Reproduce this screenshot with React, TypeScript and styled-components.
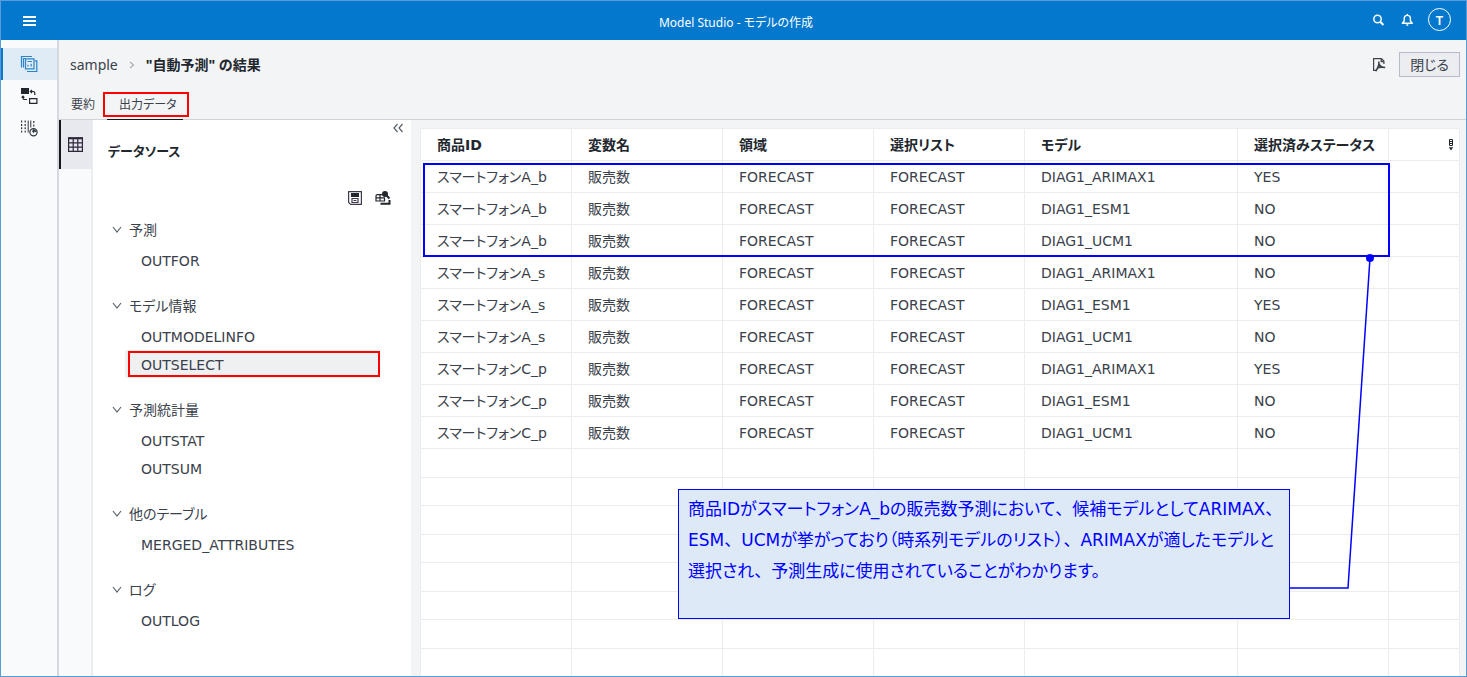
import React from "react";
import styled, { createGlobalStyle } from "styled-components";

const GlobalStyle = createGlobalStyle`
  *, *::before, *::after { box-sizing: border-box; }
  html, body { margin: 0; padding: 0; }
  body {
    background: #f3f4f6;
    color: #3a414a;
    font-family: "DejaVu Sans", "Noto Sans CJK JP", sans-serif;
    font-feature-settings: "palt";
    font-size: 14px;
    line-height: 20px;
  }
  button { font: inherit; font-feature-settings: inherit; color: inherit; margin: 0; padding: 0; border: 0; background: none; cursor: pointer; }
  svg { display: block; }
`;

const latin = `"Noto Sans", "Noto Sans CJK JP", sans-serif`;

const Window = styled.div`
  display: flex;
  flex-direction: column;
  height: 100vh;
  overflow: hidden;
  border: 1px solid #5b9bd5;
`;

const TopBar = styled.header`
  flex: none;
  display: grid;
  grid-template-columns: 1fr auto 1fr;
  align-items: center;
  height: 39px;
  padding: 0 15px 0 20px;
  background: #0378cd;
  color: #fff;
  font-family: ${latin};
`;

const AppTitle = styled.h1`
  margin: 0;
  padding-top: 4px;
  font-size: 12px;
  font-weight: 400;
`;

const TopActions = styled.div`
  display: flex;
  align-items: center;
  justify-content: flex-end;
  gap: 13px;
  padding-bottom: 2px;
`;

const IconButton = styled.button`
  display: flex;
  align-items: center;
  justify-content: center;
  justify-self: start;
  width: 16px;
  height: 16px;
`;

const Avatar = styled.button`
  width: 23px;
  height: 23px;
  border: 1px solid #fff;
  border-radius: 50%;
  font-size: 13px;
  font-weight: 600;
  line-height: 20px;
  text-align: center;
`;

const Body = styled.div`
  flex: 1;
  display: flex;
  min-height: 0;
`;

const AppRail = styled.nav`
  flex: none;
  width: 58px;
  padding-top: 8px;
  background: #f9fafc;
  border-right: 2px solid #d5d8de;
`;

const RailButton = styled.button<{ $active?: boolean }>`
  display: flex;
  align-items: center;
  justify-content: center;
  width: 100%;
  height: 32px;
  padding-right: 2px;
  border-left: 2px solid ${(p) => (p.$active ? "#0378cd" : "transparent")};
  background: ${(p) => (p.$active ? "#dfecf6" : "transparent")};
`;

const Main = styled.main`
  flex: 1;
  display: flex;
  flex-direction: column;
  min-width: 0;
`;

const PageHead = styled.div`
  flex: none;
  display: flex;
  align-items: center;
  justify-content: space-between;
  height: 49px;
  padding: 0 6px 0 11px;
`;

const Crumbs = styled.nav`
  display: flex;
  align-items: center;
  gap: 11px;
  font-family: ${latin};

  a { color: inherit; text-decoration: none; }
  strong { color: #22272e; }
`;

const HeadActions = styled.div`
  display: flex;
  align-items: center;
  gap: 12px;
`;

const CloseButton = styled.button`
  height: 25px;
  padding: 0 10px;
  border: 1px solid #b4bbc9;
  background: #ebedf1;
`;

const TabList = styled.div`
  flex: none;
  display: flex;
  gap: 6px;
  height: 31px;
  border-bottom: 1px solid #d0d3d8;
`;

const Tab = styled.button<{ $active?: boolean }>`
  position: relative;
  height: 31px;
  padding: 2px 6px 0 12px;
  font-size: 12px;
  border-bottom: 1px solid ${(p) => (p.$active ? "#15191f" : "transparent")};
`;

const TabMark = styled.span`
  position: absolute;
  inset: 3px -6px 2px -4px;
  border: 2px solid #f00;
`;

const Content = styled.div`
  flex: 1;
  display: flex;
  min-height: 0;
`;

const ViewRail = styled.div`
  flex: none;
  width: 34px;
  border-right: 2px solid #ebedf1;
  background: #f9fafc;
`;

const ViewButton = styled.button`
  display: flex;
  align-items: center;
  justify-content: center;
  width: 33px;
  height: 49px;
  border-left: 2px solid #15191f;
  border-right: 2px solid #e7e9ee;
  background: #e7e9ee;
`;

const SourcePanel = styled.aside`
  flex: none;
  width: 318px;
  background: #fff;
`;

const CollapseRow = styled.div`
  display: flex;
  justify-content: flex-end;
  height: 16px;
  padding-right: 5px;
`;

const PanelTitle = styled.h2`
  margin: 0;
  padding: 6px 15px;
  font-size: 13px;
  line-height: 20px;
  color: #22272e;
`;

const Tools = styled.div`
  display: flex;
  justify-content: flex-end;
  gap: 12px;
  padding: 22px 20px 8px;
`;

const Group = styled.section`
  margin-bottom: 16px;
`;

const GroupHead = styled.button`
  display: flex;
  align-items: center;
  gap: 7px;
  width: 100%;
  height: 32px;
  padding-left: 19px;
  text-align: left;
`;

const Items = styled.ul`
  margin: 0;
  padding: 0 31px 0 32px;
  list-style: none;
`;

const Item = styled.button<{ $active?: boolean }>`
  position: relative;
  display: block;
  width: 100%;
  height: 28px;
  padding: 2px 0 0 16px;
  text-align: left;
  background: ${(p) => (p.$active ? "#eff0f2" : "transparent")};
`;

const ItemMark = styled.span`
  position: absolute;
  inset: 1px 0 1px 3px;
  border: 2px solid #f00;
`;

const GridArea = styled.section`
  flex: 1;
  min-width: 0;
  margin: 8px 6px 0 9px;
  position: relative;
  overflow: hidden;
  background: #fff;
  border: 1px solid #ebecee;
  border-width: 1px 1px 0;
`;

const Table = styled.table`
  width: 100%;
  table-layout: fixed;
  border-collapse: separate;
  border-spacing: 0;
`;

const Col = styled.col<{ $width?: number }>`
  width: ${(p) => (p.$width ? `${p.$width}px` : "auto")};
`;

const line = "1px solid #ebecee";

const HeadCell = styled.th`
  height: 32px;
  padding: 0 0 0 16px;
  border-right: ${line};
  border-bottom: ${line};
  color: #22272e;
  text-align: left;
  white-space: nowrap;

  &:last-child { border-right: 0; padding: 0 5px; }
`;

const MenuButton = styled(IconButton)`
  width: 6px;
  margin-left: auto;
`;

const Cell = styled.td`
  height: 32px;
  padding: 1px 0 0 16px;
  border-right: ${line};
  border-bottom: ${line};
  white-space: nowrap;

  &:last-child { border-right: 0; }
`;

const BlankRow = styled.tr`
  td { height: 28px; padding: 0; }
  &:nth-child(even) td { height: 29px; }
`;

const RowsMark = styled.div`
  position: absolute;
  left: 2px;
  top: 34px;
  width: 967px;
  height: 94px;
  border: 2px solid #00f;
`;

const Callout = styled.p`
  position: absolute;
  left: 257px;
  top: 360px;
  width: 612px;
  height: 130px;
  margin: 0;
  padding: 4px 9px;
  border: 1px solid #00f;
  background: #dde9f6;
  color: #00f;
  font-size: 17px;
  line-height: 31px;
  white-space: nowrap;
`;

const FullWidth = styled.span`
  font-feature-settings: normal;
`;

const Leader = styled.svg`
  position: absolute;
  left: 868px;
  top: 124px;
`;

const MenuIcon = () => (
  <svg width="16" height="16" viewBox="0 0 16 16" stroke="#fff" strokeWidth="2">
    <path d="M2 4h13M2 8h13M2 12h13" />
  </svg>
);
const SearchIcon = () => (
  <svg width="16" height="16" viewBox="0 0 16 16" fill="none" stroke="#fff" strokeWidth="1.5">
    <circle cx="7.5" cy="7" r="3.7" />
    <path d="M10.200 9.800l3.200 3.200" strokeWidth="2" />
  </svg>
);
const BellIcon = () => (
  <svg width="16" height="16" viewBox="0 0 16 16" fill="none" stroke="#fff" strokeWidth="1.400">
    <path d="M5.200 9V6.500a3.100 3.100 0 0 1 6.200 0V9l1.900 2.300h-10z" strokeLinejoin="round" />
    <path d="M8.300 2v1.500M7.300 13h2" />
  </svg>
);
const PipelinesIcon = () => (
  <svg width="18" height="18" viewBox="0 0 18 18" fill="none" stroke="#2b83c9" strokeWidth="1.200">
    <path d="M1.500 12.500v-11h10.500M3.500 12.500v-9h1.500" />
    <path d="M5.500 3.800h8.500v10h-8.500z" />
    <path d="M14.800 5.800h2v10.700H7" />
    <path d="M7.500 6.500h4.500M8 9.800v1.700M11.200 8.800v2.700" />
  </svg>
);
const CompareIcon = () => (
  <svg width="18" height="18" viewBox="0 0 18 18" fill="none" stroke="#22272e" strokeWidth="1.200">
    <path d="M1 1h8v6H1z" fill="#22272e" stroke="none" />
    <path d="M9.600 11.600h7.300v4.800H9.600z" />
    <path d="M10.500 4.500h2.800a1.500 1.500 0 0 1 1.500 1.500v2M12 2.800L10.300 4.500 12 6.200M7 12.500H4.600A1.600 1.600 0 0 1 3 10.900V9.200M1.600 10.700L3 9.200 4.400 10.700" />
  </svg>
);
const InsightsIcon = () => (
  <svg width="18" height="18" viewBox="0 0 18 18" fill="none" stroke="#30363e" strokeWidth="1.200">
    <path d="M1.600 1.500v12M5.200 1.500v12M13.800 2v6" strokeDasharray="2 1.400" />
    <path d="M8.200 1.500v12M10.800 1.500v7" strokeWidth="1" />
    <circle cx="13.500" cy="13.200" r="3.600" />
    <path d="M13 10.200c2 .3 3.500 1.400 3.600 3l-2.200-.4-1 1.400-1.200-1.800z" fill="#30363e" stroke="none" />
  </svg>
);
const TableIcon = () => (
  <svg width="15" height="15" viewBox="0 0 15 15" fill="none" stroke="#2d2638" strokeWidth="1.200">
    <path d="M.6 1.500h13.800v12.900H.6zM5.200 1.500v12.900M9.800 1.500v12.900M.6 5.800h13.800M.6 10.100h13.800" />
    <path d="M0 1.200h15" strokeWidth="2.200" />
  </svg>
);
const SaveIcon = () => (
  <svg width="16" height="16" viewBox="0 0 16 16" fill="none" stroke="#40384c" strokeWidth="1.200">
    <path d="M1.600 1.600h12.800v12.800H3.600l-2-2z" strokeLinejoin="round" />
    <path d="M4 3h8v4H4z" fill="#22272e" stroke="none" />
    <path d="M5 8.500h6v4H5zM6.500 10.500h3" />
  </svg>
);
const ExploreIcon = () => (
  <svg width="16" height="16" viewBox="0 0 16 16" fill="none" stroke="#22272e" strokeWidth="1.200">
    <path d="M7.500 4.600H2.500a1.500 1.500 0 0 0-1.500 1.500V11h8.500V7.500M1 7.800h9M5 4.600V11" />
    <circle cx="10" cy="4" r="3" fill="#22272e" stroke="none" />
    <path d="M11 5l3.500 3.500" strokeWidth="2" />
    <path d="M5.500 13.700h9V10" strokeWidth="2" />
  </svg>
);
const PdfIcon = () => (
  <svg width="14" height="15" viewBox="0 0 14 15" fill="none" stroke="#3f444c" strokeWidth="1.200">
    <path d="M3.800 13.300H1.600V1.600h7.800l2.500 2.500v3M9.200 1.600v3h2.700" />
    <path d="M6.600 4.500c1 2-.6 6.300-3 9.800M6.900 6.500c.8 2.600 2.800 4 6.300 4M5.200 11.200c2-1.300 4.500-1.400 8-.7" strokeWidth="1.600" />
  </svg>
);
const ColumnsIcon = () => (
  <svg width="6" height="12" viewBox="0 0 6 12" fill="none" stroke="#22272e">
    <path d="M1.500.5h3v6h-3zM1.500 2.500h3M1.500 4.500h3" />
    <path d="M.8 8.300h4.400L3 11.500z" fill="#22272e" stroke="none" />
  </svg>
);
const ChevronDown = () => (
  <svg width="10" height="8" viewBox="0 0 10 8" fill="none" stroke="#59616b" strokeWidth="1.200">
    <path d="M1 1l4 5 4-5" />
  </svg>
);
const ChevronRight = () => (
  <svg width="6" height="8" viewBox="0 0 6 8" fill="none" stroke="#a9afb8" strokeWidth="1.200">
    <path d="M1 1l3.500 3L1 7" />
  </svg>
);
const CollapseIcon = () => (
  <svg width="12" height="10" viewBox="0 0 12 10" fill="none" stroke="#59616b" strokeWidth="1.200">
    <path d="M5.500 1L2 5l3.500 4M10.500 1L7 5l3.500 4" />
  </svg>
);

const groups = [
  { name: "予測", items: ["OUTFOR"] },
  { name: "モデル情報", items: ["OUTMODELINFO", "OUTSELECT"] },
  { name: "予測統計量", items: ["OUTSTAT", "OUTSUM"] },
  { name: "他のテーブル", items: ["MERGED_ATTRIBUTES"] },
  { name: "ログ", items: ["OUTLOG"] },
];

const columns = [
  { name: "商品ID", width: 151 },
  { name: "変数名", width: 151 },
  { name: "領域", width: 151 },
  { name: "選択リスト", width: 151 },
  { name: "モデル", width: 213 },
  { name: "選択済みステータス", width: 151 },
];

const results: [string, string, string][] = [
  ["スマートフォンA_b", "DIAG1_ARIMAX1", "YES"],
  ["スマートフォンA_b", "DIAG1_ESM1", "NO"],
  ["スマートフォンA_b", "DIAG1_UCM1", "NO"],
  ["スマートフォンA_s", "DIAG1_ARIMAX1", "NO"],
  ["スマートフォンA_s", "DIAG1_ESM1", "YES"],
  ["スマートフォンA_s", "DIAG1_UCM1", "NO"],
  ["スマートフォンC_p", "DIAG1_ARIMAX1", "YES"],
  ["スマートフォンC_p", "DIAG1_ESM1", "NO"],
  ["スマートフォンC_p", "DIAG1_UCM1", "NO"],
];

const note = [
  "商品IDがスマートフォンA_bの販売数予測において、候補モデルとしてARIMAX、",
  "ESM、UCMが挙がっており（時系列モデルのリスト）、ARIMAXが適したモデルと",
  "選択され、予測生成に使用されていることがわかります。",
];

/* Commas keep their full-width advance; the kana around them are set proportionally. */
const NoteLine = ({ text }: { text: string }) => (
  <>
    {text.split(/(、)/).map((part, i) => (part === "、" ? <FullWidth key={i}>{part}</FullWidth> : part))}
    <br />
  </>
);

export default function App() {
  return (
    <Window lang="ja">
      <GlobalStyle />
      <TopBar>
        <IconButton aria-label="メニュー"><MenuIcon /></IconButton>
        <AppTitle>Model Studio - モデルの作成</AppTitle>
        <TopActions>
          <IconButton aria-label="検索"><SearchIcon /></IconButton>
          <IconButton aria-label="通知"><BellIcon /></IconButton>
          <Avatar>T</Avatar>
        </TopActions>
      </TopBar>
      <Body>
        <AppRail>
          <RailButton $active aria-label="パイプライン"><PipelinesIcon /></RailButton>
          <RailButton aria-label="パイプラインの比較"><CompareIcon /></RailButton>
          <RailButton aria-label="インサイト"><InsightsIcon /></RailButton>
        </AppRail>
        <Main>
          <PageHead>
            <Crumbs>
              <a href="#sample">sample</a>
              <ChevronRight />
              <strong>"自動予測" の結果</strong>
            </Crumbs>
            <HeadActions>
              <IconButton aria-label="PDF"><PdfIcon /></IconButton>
              <CloseButton>閉じる</CloseButton>
            </HeadActions>
          </PageHead>
          <TabList role="tablist">
            <Tab role="tab" aria-selected={false}>要約</Tab>
            <Tab role="tab" aria-selected $active>出力データ<TabMark /></Tab>
          </TabList>
          <Content>
            <ViewRail>
              <ViewButton aria-label="テーブル"><TableIcon /></ViewButton>
            </ViewRail>
            <SourcePanel>
              <CollapseRow>
                <IconButton aria-label="折りたたむ"><CollapseIcon /></IconButton>
              </CollapseRow>
              <PanelTitle>データソース</PanelTitle>
              <Tools>
                <IconButton aria-label="保存"><SaveIcon /></IconButton>
                <IconButton aria-label="探索"><ExploreIcon /></IconButton>
              </Tools>
              {groups.map((g) => (
                <Group key={g.name}>
                  <GroupHead aria-expanded><ChevronDown />{g.name}</GroupHead>
                  <Items>
                    {g.items.map((name) => (
                      <li key={name}>
                        <Item $active={name === "OUTSELECT"}>
                          {name}
                          {name === "OUTSELECT" && <ItemMark />}
                        </Item>
                      </li>
                    ))}
                  </Items>
                </Group>
              ))}
            </SourcePanel>
            <GridArea>
              <Table>
                <colgroup>
                  {columns.map((c) => <Col key={c.name} $width={c.width} />)}
                  <Col />
                </colgroup>
                <thead>
                  <tr>
                    {columns.map((c) => <HeadCell key={c.name} scope="col">{c.name}</HeadCell>)}
                    <HeadCell><MenuButton aria-label="列の管理"><ColumnsIcon /></MenuButton></HeadCell>
                  </tr>
                </thead>
                <tbody>
                  {results.map(([id, model, status]) => (
                    <tr key={id + model}>
                      <Cell>{id}</Cell>
                      <Cell>販売数</Cell>
                      <Cell>FORECAST</Cell>
                      <Cell>FORECAST</Cell>
                      <Cell>{model}</Cell>
                      <Cell>{status}</Cell>
                      <Cell />
                    </tr>
                  ))}
                  {Array.from({ length: 8 }, (_, i) => (
                    <BlankRow key={i}>
                      {Array.from({ length: 7 }, (_, j) => <Cell key={j} />)}
                    </BlankRow>
                  ))}
                </tbody>
              </Table>
              <RowsMark />
              <Leader width="90" height="340" viewBox="0 0 90 340" fill="none" stroke="#00f">
                <path d="M81 5L59 335H0" strokeWidth="1.500" />
                <circle cx="81" cy="5" r="4" fill="#00f" stroke="none" />
              </Leader>
              <Callout>
                {note.map((text) => <NoteLine key={text} text={text} />)}
              </Callout>
            </GridArea>
          </Content>
        </Main>
      </Body>
    </Window>
  );
}
